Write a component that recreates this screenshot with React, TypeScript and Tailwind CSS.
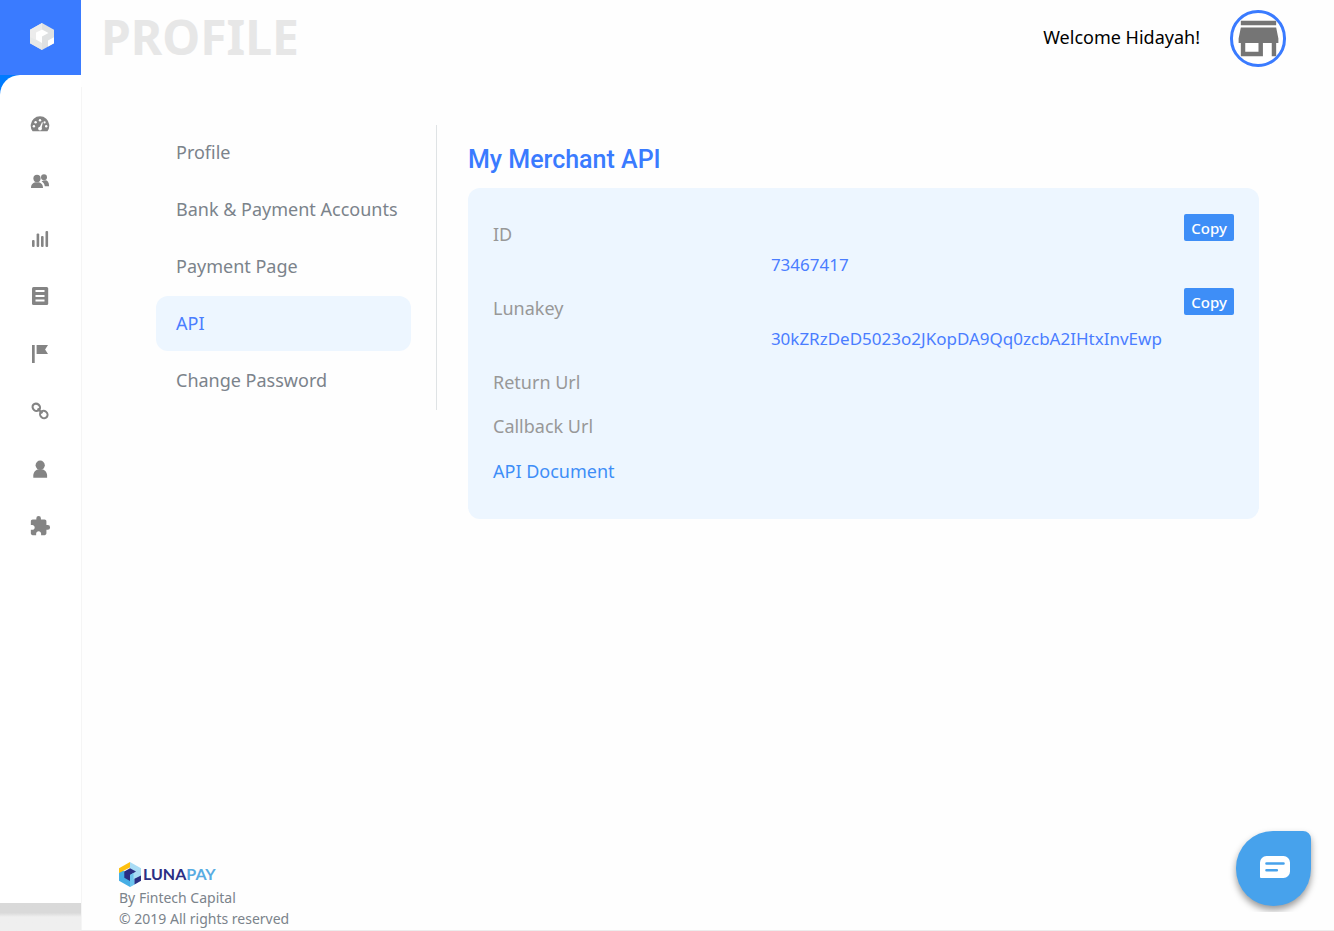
import React from "react";
import { MdExtension, MdStore } from "react-icons/md";

const navIcons: { label: string; icon: React.ReactNode }[] = [
  {
    label: "Dashboard",
    icon: (
      <svg viewBox="0 0 20 20" className="size-5" fill="currentColor">
        <path d="M2.6 17.2A9.3 9.3 0 1 1 17.4 17.2Z" />
        <g fill="#fff">
          <circle cx="3.9" cy="12.3" r="1.2" />
          <circle cx="5.6" cy="8.2" r="1.2" />
          <circle cx="10" cy="6.2" r="1.2" />
          <circle cx="14.6" cy="8.4" r="1.1" />
          <circle cx="16.2" cy="12.3" r="1.2" />
          <circle cx="10" cy="14.6" r="1.9" />
          <path d="M9.3 14 12 8.2l.9.4-1.6 6.2Z" />
        </g>
      </svg>
    ),
  },
  {
    label: "Customers",
    icon: (
      <svg viewBox="0 0 20 20" className="size-5" fill="currentColor">
        <circle cx="7" cy="7.4" r="3.6" />
        <path d="M1 17c0-4 2.2-5.8 6-5.8s6 1.8 6 5.8Z" />
        <circle cx="14" cy="6.2" r="3" />
        <path d="M11.6 10.3c4.6-2.2 7.5-.5 7.5 4.9h-4.3c-.4-2.2-1.500-3.800-3.200-4.900Z" />
      </svg>
    ),
  },
  {
    label: "Statistics",
    icon: (
      <svg viewBox="0 0 20 20" className="size-5" fill="currentColor">
        <rect x="2" y="11" width="2.6" height="7" rx="1" />
        <rect x="6.6" y="4.5" width="2.6" height="13.5" rx="1" />
        <rect x="11" y="7" width="2.6" height="11" rx="1" />
        <rect x="15.5" y="2" width="2.6" height="16" rx="1" />
      </svg>
    ),
  },
  {
    label: "Bills",
    icon: (
      <svg viewBox="0 0 20 20" className="size-5" fill="currentColor">
        <rect x="2" y="1" width="16.2" height="18" rx="1.5" />
        <path fill="#fff" d="M5.5 4h9v2h-9zM5.5 9h9v2h-9zM5.5 13.5h9v2h-9z" />
      </svg>
    ),
  },
  {
    label: "Reports",
    icon: (
      <svg viewBox="0 0 20 20" className="size-5" fill="currentColor">
        <path d="M2 1h2.7v18H2zM6.6 1H18l-2.9 4.5L18 10H6.600z" />
      </svg>
    ),
  },
  {
    label: "Links",
    icon: (
      <svg viewBox="0 0 20 20" className="size-5" fill="none" stroke="currentColor" strokeWidth="2.1">
        <ellipse cx="6.3" cy="6.3" rx="3.9" ry="3.5" transform="rotate(40 6.3 6.3)" />
        <ellipse cx="13.8" cy="13.5" rx="3.9" ry="3.5" transform="rotate(40 13.8 13.5)" />
        <path d="m7.6 7.6 4.8 4.6" />
      </svg>
    ),
  },
  {
    label: "Account",
    icon: (
      <svg viewBox="0 0 20 20" className="size-5" fill="currentColor">
        <circle cx="10.2" cy="6.2" r="4.6" />
        <path d="M3.3 18.8v-2.2c0-3.3 2.5-6.6 6.9-6.6s6.9 3.3 6.9 6.6v2.2Z" />
      </svg>
    ),
  },
  { label: "Plugins", icon: <MdExtension className="size-[22px]" /> },
];

const menu = ["Profile", "Bank & Payment Accounts", "Payment Page", "API", "Change Password"];

const fields: { name: string; value?: string }[] = [
  { name: "ID", value: "73467417" },
  { name: "Lunakey", value: "30kZRzDeD5023o2JKopDA9Qq0zcbA2IHtxInvEwp" },
  { name: "Return Url" },
  { name: "Callback Url" },
];

function CubeLight() {
  return (
    <svg viewBox="0 0 24 27" className="h-[27px] w-6">
      <path fill="#dfe1e2" d="M12 0 24 6.700v13.600L12 27 0 20.300V6.700Z" />
      <path fill="#e6e8e8" d="M0 6.700 12 13.500V27L0 20.300Z" />
      <path fill="#ececec" d="M12 0v6.500L6 10v7l-6-3V6.700Z" />
      <path fill="#fff" d="m6 9.500 6-3 6.500 3.500-6.500 3.500V20l-6-3.500ZM18 17.500l6-3.300v6.100L18 23.500Z" />
    </svg>
  );
}

function CubeColor() {
  return (
    <svg viewBox="0 0 22 25" className="h-[25px] w-[22px]">
      <path fill="#45aee5" d="M0 6.200 11 12.500V25L0 18.800Z" />
      <path fill="#a9dcf5" d="M11 0 22 6.200v12.600L11 25V12.500Z" />
      <path fill="#fdc010" d="M11 0v5.500L0 11V6.200Z" />
      <path fill="#2b2e83" d="m5.300 9.500 5.700-3.300 6 3.300-6 3.400V19l-5.700-3.300Z" />
      <path fill="#6cc4ee" d="m11 12.900 3.500-2v6L11 19ZM11 19l4.500-2.300v5.900L11 25Z" />
      <path fill="#2b2e83" d="m15.500 16.700 6.500-3.200v5.300l-6.500 3.800Z" />
    </svg>
  );
}

export default function App() {
  return (
    <div className="flex min-h-screen bg-[#fefefe] font-['Noto_Sans',sans-serif] text-lg">
      <aside className="flex w-[81px] shrink-0 flex-col bg-[#efefef]">
        <a
          href="#home"
          aria-label="LunaPay home"
          className="flex h-[75px] items-center justify-center bg-[#3a7bff] pb-0.5 pl-[3px]"
        >
          <CubeLight />
        </a>
        <div className="flex grow flex-col bg-[#007bff]">
          <nav aria-label="Main" className="grow rounded-tl-[20px] bg-white pt-5">
            <ul className="grid h-[460px] auto-rows-fr">
              {navIcons.map((item) => (
                <li key={item.label} className="flex">
                  <a
                    href={`#${item.label.toLowerCase()}`}
                    aria-label={item.label}
                    className="flex grow items-center justify-center pr-px text-[#848484]"
                  >
                    {item.icon}
                  </a>
                </li>
              ))}
            </ul>
          </nav>
        </div>
        <div className="h-7 bg-linear-to-b from-[#d9d9d9] from-35% to-[#efefef] to-50%" />
      </aside>

      <div className="flex min-w-0 grow flex-col border-b border-[#ececec]">
        <header className="flex h-[77px] items-center justify-between pr-12 pl-5">
          <h1 className="pb-1 text-[48px] leading-[73px] font-bold text-[#e7e7e7]">PROFILE</h1>
          <div className="flex items-center gap-[30px]">
            <span className="pb-1 text-black">Welcome Hidayah!</span>
            <a
              href="#account"
              aria-label="Store account"
              className="flex h-[57px] w-14 items-center justify-center rounded-full border-3 border-[#3a7bff] bg-white text-[#757575]"
            >
              <MdStore className="size-[53px] shrink-0" />
            </a>
          </div>
        </header>

        <div className="mt-2.5 flex grow flex-col border-l border-[#f5f5f5]">
          <main className="flex items-start gap-[31px] pt-[38px] pr-[75px] pl-[74px]">
            <nav aria-label="Profile sections" className="shrink-0 border-r border-[#dfe3e5] pr-[25px]">
              <ul>
                {menu.map((name) => (
                  <li key={name} className="pb-0.5">
                    <a
                      href="#section"
                      aria-current={name === "API" ? "page" : undefined}
                      className={
                        name === "API"
                          ? "flex h-[55px] w-[255px] items-center rounded-xl bg-[#edf6ff] px-5 pb-0.5 whitespace-nowrap text-[#4a7dff]"
                          : "flex h-[55px] w-[255px] items-center rounded-xl px-5 pb-0.5 whitespace-nowrap text-[#7b838b]"
                      }
                    >
                      {name}
                    </a>
                  </li>
                ))}
              </ul>
            </nav>

            <section className="min-w-0 grow pt-5">
              <h2 className="mb-[13px] font-[Roboto,sans-serif] text-[25px] leading-[30px] font-medium text-[#3a7bff]">
                My Merchant API
              </h2>
              <div className="rounded-xl bg-[#edf6ff] p-[25px] leading-[27px]">
                <dl>
                  {fields.map((f) => (
                    <div key={f.name} className="pt-px pb-[9px]">
                      <dt className="flex items-start justify-between text-[#989898]">
                        <span className="pt-[7px]">{f.name}</span>
                        {f.value && (
                          <button
                            type="button"
                            aria-label={`Copy ${f.name}`}
                            className="h-[27px] w-[50px] rounded-xs bg-[#3e8ef7] pt-px text-[15px] leading-[26px] font-medium text-white"
                          >
                            Copy
                          </button>
                        )}
                      </dt>
                      {f.value && (
                        <dd className="grid grid-cols-8 pt-[3px] text-[17px] text-[#4a7dff]">
                          <span className="col-span-5 col-start-4 break-all">{f.value}</span>
                        </dd>
                      )}
                    </div>
                  ))}
                </dl>
                <a href="#api-document" className="block pt-[9px] pb-[9px] text-[#3e8ef7]">
                  API Document
                </a>
              </div>
            </section>
          </main>

          <footer className="mt-auto pb-px pl-[37px] text-sm leading-[21px] text-[#7b838b]">
            <div className="flex h-[26px] items-center font-[Lato,sans-serif] text-base font-bold">
              <CubeColor />
              <span className="pl-0.5 text-[#2b2e83]">LUNA</span>
              <span className="text-[#58ace2]">PAY</span>
            </div>
            <p>By Fintech Capital</p>
            <p>© 2019 All rights reserved</p>
          </footer>
        </div>
      </div>

      <div className="fixed right-[15px] bottom-[19px] overflow-hidden px-2 pt-2 pb-1.5">
        <button
          type="button"
          aria-label="Open chat"
          className="flex size-[75px] items-center justify-center rounded-tl-[37px] rounded-tr-lg rounded-b-[37px] bg-[#47a2ec] pb-1 pl-0.5 shadow-[0_4px_7px_rgba(0,0,0,0.4)]"
        >
          <svg viewBox="0 0 30 22" className="h-[22px] w-[30px]">
            <path fill="#fff" d="M6.5 0h17A6.5 6.5 0 0 1 30 6.5v9A6.5 6.5 0 0 1 23.5 22H1a1 1 0 0 1-1-1V6.5A6.5 6.5 0 0 1 6.5 0Z" />
            <path stroke="#47a2ec" strokeWidth="2.6" strokeLinecap="round" d="M6.5 7.5h17M6.5 14.3h10.3" />
          </svg>
        </button>
      </div>
    </div>
  );
}
